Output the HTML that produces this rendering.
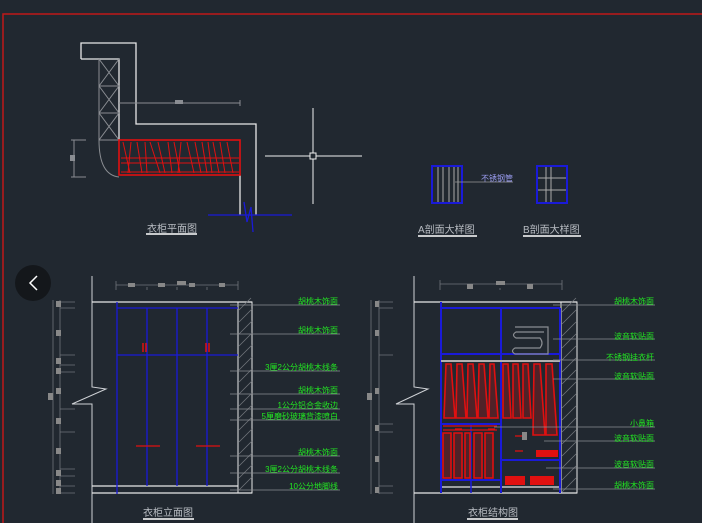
<!DOCTYPE html>
<html><head><meta charset="utf-8"><style>
html,body{margin:0;padding:0;background:#212830;}
svg{display:block}
text{font-family:"Liberation Sans","Noto Sans CJK SC",sans-serif;}
.g{fill:#22e622;font-size:8px}
.t{fill:#b8bcc2;font-size:10px}
</style></head><body>
<svg width="702" height="523" viewBox="0 0 702 523" xmlns="http://www.w3.org/2000/svg">
<rect width="702" height="523" fill="#212830"/>
<path d="M3 523V14H702" stroke="#c01818" stroke-width="1.5" fill="none"/>

<!-- PLAN -->
<g fill="none" stroke-width="1.3">
<path d="M81 59V43H136V124H256V215" stroke="#e8e8e8"/>
<path d="M81 59H119V140" stroke="#e8e8e8"/>
<path d="M240 175V215" stroke="#e8e8e8"/>
<g stroke="#8a8d92" stroke-width="1">
<path d="M99 59V140M99 86H119M99 113H119M99 59L119 86M119 59L99 86M99 86L119 113M119 86L99 113M99 113L119 140M119 113L99 140M99 140H119"/>
<path d="M99 140Q99 175 119 177"/>
<path d="M119 103H240M240 100V106M74 140V177M71 140H86M71 177H86"/>
</g>
<rect x="175" y="100" width="8" height="4" fill="#8a8d92" stroke="none"/>
<rect x="70" y="155" width="5" height="6" fill="#8a8d92" stroke="none"/>
<rect x="119" y="140" width="121" height="35" stroke="#e01010" stroke-width="1.6"/>
<g stroke="#e01010" stroke-width="1">
<path d="M121 158H239M121 163H239M121 172H239"/>
<path d="M123 142L130 173M131 142L128 173M137 142L142 173M145 142L147 173M150 142L160 173M158 142L165 173M168 142L172 173M174 142L180 173M181 142L178 173M187 142L194 173M195 142L201 173M202 142L207 173M208 142L212 173M213 142L219 173M220 142L225 173M227 142L233 173"/>
</g>
<path d="M208 215H292" stroke="#1a1ad8"/>
<path d="M244 202L247 222L251 207L253 232" stroke="#1a1ad8"/>
<path d="M265 156H362M313 108V204" stroke="#f0f0f0" stroke-width="1"/>
<rect x="310" y="153" width="6" height="6" stroke="#f0f0f0" stroke-width="1" fill="#212830"/>
</g>
<text x="147" y="232" class="t">衣柜平面图</text>
<path d="M146 234H197" stroke="#fff" stroke-width="1.5"/>

<!-- SECTIONS -->
<g fill="none">
<rect x="432" y="166" width="30" height="37" stroke="#1a1ad8" stroke-width="2"/>
<path d="M438 167V202M443 167V202M449 167V202M454 167V202M458 167V202" stroke="#aaa" stroke-width="1"/>
<path d="M455 182H513" stroke="#999" stroke-width="0.8"/>
<rect x="537" y="166" width="30" height="37" stroke="#1a1ad8" stroke-width="2"/>
<path d="M546 167V202M551 167V202M538 178H566M538 190H566" stroke="#aaa" stroke-width="1"/>
</g>
<text x="481" y="181" fill="#9a9cf0" font-size="8">不锈钢管</text>
<text x="418" y="233" class="t">A剖面大样图</text>
<path d="M418 236H477" stroke="#fff" stroke-width="1.5"/>
<text x="523" y="233" class="t">B剖面大样图</text>
<path d="M523 236H581" stroke="#fff" stroke-width="1.5"/>

<!-- back button -->
<circle cx="33" cy="283" r="18" fill="#14171b"/>
<path d="M37 276L30 283L37 290" stroke="#fff" stroke-width="1.5" fill="none"/>

<!-- ELEVATION -->
<g fill="none" stroke-width="1">
<path d="M92 276V387L106 389L72 404H92V523" stroke="#cfd2d6"/>
<path d="M92 302H252M92 486H238M92 493H252" stroke="#e8e8e8" stroke-width="1.3"/>
<rect x="238" y="302" width="14" height="191" stroke="#e8e8e8"/>
<g stroke="#70747a" stroke-width="0.8">
<path d="M239 310L251 298M239 322L252 309M239 334L252 321M239 346L252 333M239 358L252 345M239 370L252 357M239 382L252 369M239 394L252 381M239 406L252 393M239 418L252 405M239 430L252 417M239 442L252 429M239 454L252 441M239 466L252 453M239 478L252 465M239 490L252 477"/>
<path d="M116 285H238M116 281V290M147 287V290M177 287V290M207 287V290M238 281V290"/>
<path d="M53 300V494M60 300V494M60 302H75M60 308H75M60 355H75M60 365H75M60 372H75M60 409H75M60 432H75M60 469H75M60 476H75M60 486H75M60 493H75"/>
</g>
<g fill="#888" stroke="none">
<rect x="128" y="283" width="7" height="4"/><rect x="158" y="283" width="7" height="4"/><rect x="177" y="281" width="9" height="4"/><rect x="189" y="283" width="6" height="4"/><rect x="219" y="283" width="6" height="4"/>
<rect x="56" y="301" width="5" height="6"/><rect x="56" y="330" width="5" height="6"/><rect x="56" y="358" width="5" height="6"/><rect x="56" y="368" width="5" height="6"/><rect x="56" y="388" width="5" height="6"/><rect x="48" y="393" width="5" height="7"/><rect x="56" y="418" width="5" height="6"/><rect x="56" y="448" width="5" height="6"/><rect x="56" y="470" width="5" height="6"/><rect x="56" y="480" width="5" height="6"/><rect x="56" y="488" width="5" height="6"/>
</g>
<g stroke="#1a1ad8" stroke-width="1.3">
<path d="M117 302V494M147 308V486M177 308V486M207 308V486M117 308H238M117 355H238"/>
</g>
<path d="M143 343V352M146 343V352M206 343V352M209 343V352" stroke="#e01010" stroke-width="1.5"/>
<path d="M136 446H160M196 446H220" stroke="#e01010" stroke-width="1.2"/>
<g stroke="#8a8d92" stroke-width="0.7">
<path d="M230 305H340M230 334H340M230 371H340M230 394H340M230 409H340M230 420H340M230 456H340M230 473H340M230 490H340"/>
</g>
</g>
<g class="g" text-anchor="end">
<text x="338" y="304">胡桃木饰面</text>
<text x="338" y="333">胡桃木饰面</text>
<text x="338" y="370">3厘2公分胡桃木线条</text>
<text x="338" y="393">胡桃木饰面</text>
<text x="338" y="408">1公分铝合金收边</text>
<text x="338" y="419">5厘磨砂玻璃背漆喷白</text>
<text x="338" y="455">胡桃木饰面</text>
<text x="338" y="472">3厘2公分胡桃木线条</text>
<text x="338" y="489">10公分地脚线</text>
</g>
<text x="143" y="516" class="t">衣柜立面图</text>
<path d="M143 519H194" stroke="#fff" stroke-width="1.5"/>

<!-- STRUCTURE -->
<g fill="none" stroke-width="1">
<path d="M414 276V387L428 389L396 404H414V523" stroke="#cfd2d6"/>
<path d="M414 302H577M414 493H577M440 487H560" stroke="#e8e8e8" stroke-width="1.3"/>
<rect x="561" y="302" width="16" height="191" stroke="#e8e8e8"/>
<g stroke="#70747a" stroke-width="0.8">
<path d="M562 312L576 298M562 324L576 310M562 336L576 322M562 348L576 334M562 360L576 346M562 372L576 358M562 384L576 370M562 396L576 382M562 408L576 394M562 420L576 406M562 432L576 418M562 444L576 430M562 456L576 442M562 468L576 454M562 480L576 466M562 492L576 478"/>
<path d="M440 284H562M440 280V290M500 288V290M562 280V290"/>
<path d="M371 300V494M379 300V494M379 302H393M379 308H393M379 355H393M379 424H393M379 432H393M379 486H393M379 493H393"/>
</g>
<g fill="#888" stroke="none">
<rect x="467" y="284" width="6" height="5"/><rect x="496" y="281" width="9" height="4"/><rect x="527" y="284" width="6" height="5"/>
<rect x="375" y="301" width="4" height="6"/><rect x="375" y="330" width="4" height="6"/><rect x="375" y="388" width="4" height="6"/><rect x="367" y="393" width="5" height="7"/><rect x="375" y="425" width="4" height="6"/><rect x="375" y="456" width="4" height="6"/><rect x="375" y="487" width="4" height="6"/>
</g>
<g stroke="#1a1ad8" stroke-width="2">
<path d="M441 302V493M560 308V493M501 308V493M441 308H560M441 354H560M441 424H501M441 480H501M501 460H560"/>
<path d="M471 424V493" stroke-width="1.5"/>
</g>
<path d="M441 361H560" stroke="#b0b0b0" stroke-width="2"/>
<path d="M515 327H548V354H515Q510 351 515 348H540Q544 343 540 338H516Q511 335 516 332H544" stroke="#8a8d92" stroke-width="1.2"/>
<g stroke="#e01010" stroke-width="1.6" fill="rgba(224,16,16,0.25)">
<path d="M446 364L444 418H455L451 364ZM457 364L456 418H466L462 364ZM468 364L467 418H477L473 364ZM479 364L478 418H488L484 364ZM490 364L489 418H498L494 364Z"/>
<path d="M503 364L503 418H511L508 364ZM513 364L513 418H521L518 364ZM523 364L523 418H531L528 364ZM534 364L533 435H545L540 364ZM546 364L546 435H557L552 364Z"/>
<path d="M443 433V478H451V433ZM454 433V478H462V433ZM465 433V478H470V433ZM474 433V478H482V433ZM485 433V478H493V433Z"/>
</g>
<g stroke="#e01010" stroke-width="1.2">
<path d="M443 430H497M443 426H497"/>
<path d="M455 429H462M488 429H495M515 436H523M515 451H523"/>
</g>
<g fill="#e01010"><rect x="536" y="450" width="22" height="7"/><rect x="505" y="476" width="20" height="9"/><rect x="530" y="476" width="24" height="9"/></g>
<rect x="522" y="432" width="5" height="8" fill="#888"/>
<g stroke="#8a8d92" stroke-width="0.7">
<path d="M553 305H655M553 339H655M553 360H655M553 379H655M494 427H655M544 441H655M546 468H655M553 489H655"/>
</g>
</g>
<g class="g" text-anchor="end">
<text x="654" y="304">胡桃木饰面</text>
<text x="654" y="339">波音软贴面</text>
<text x="654" y="360">不锈钢挂衣杆</text>
<text x="654" y="379">波音软贴面</text>
<text x="654" y="426">小鼻箱</text>
<text x="654" y="441">波音软贴面</text>
<text x="654" y="467">波音软贴面</text>
<text x="654" y="488">胡桃木饰面</text>
</g>
<text x="468" y="516" class="t">衣柜结构图</text>
<path d="M467 519H518" stroke="#fff" stroke-width="1.5"/>
</svg>
</body></html>
